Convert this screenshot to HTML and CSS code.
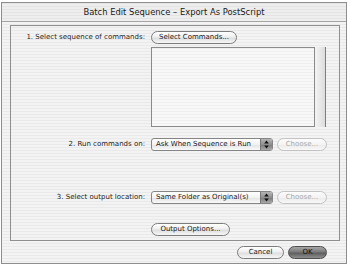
FILE: index.html
```html
<!DOCTYPE html>
<html>
<head>
<meta charset="utf-8">
<title>Batch Edit Sequence</title>
<link rel="stylesheet" href="styles.css">
</head>
<body>
<div class="window">
  <div class="titlebar">Batch Edit Sequence – Export As PostScript</div>
  <div class="content">
    <div class="group">
      <div class="row">
        <div class="label">1. Select sequence of commands:</div>
        <button class="btn btn-select">Select Commands...</button>
      </div>
      <div class="row row-list">
        <div class="label"></div>
        <div class="listwrap">
          <div class="list"></div>
          <div class="scroll"></div>
        </div>
      </div>
      <div class="row row-run">
        <div class="label">2. Run commands on:</div>
        <div class="popup">
          <span class="popup-text">Ask When Sequence is Run</span>
          <span class="popup-arrows"><svg width="5" height="9" viewBox="0 0 5 9"><path d="M2.5 0.5 L4.8 3.5 L0.2 3.5 Z M2.5 8.5 L4.8 5.5 L0.2 5.5 Z" fill="#111"/></svg></span>
        </div>
        <button class="btn btn-choose" disabled>Choose...</button>
      </div>
      <div class="row row-out">
        <div class="label">3. Select output location:</div>
        <div class="popup">
          <span class="popup-text">Same Folder as Original(s)</span>
          <span class="popup-arrows"><svg width="5" height="9" viewBox="0 0 5 9"><path d="M2.5 0.5 L4.8 3.5 L0.2 3.5 Z M2.5 8.5 L4.8 5.5 L0.2 5.5 Z" fill="#111"/></svg></span>
        </div>
        <button class="btn btn-choose" disabled>Choose...</button>
      </div>
      <div class="row row-opts">
        <div class="label"></div>
        <button class="btn btn-opts">Output Options...</button>
      </div>
    </div>
    <div class="actions">
      <button class="btn btn-cancel">Cancel</button>
      <button class="btn btn-ok">OK</button>
    </div>
  </div>
</div>
</body>
</html>
```

FILE: styles.css
```css
html, body {
  margin: 0;
  padding: 0;
  background: #ffffff;
}

body {
  font-family: "DejaVu Sans", "Liberation Sans", sans-serif;
  color: #1a1a1a;
}

.window {
  margin: 2px 0 0 1px;
  width: 346px;
  height: 262px;
  box-sizing: border-box;
  border: 1px solid #8e8e8e;
  background: repeating-linear-gradient(#e9e9e9 0 1px, #f3f3f3 1px 3px);
  display: flex;
  flex-direction: column;
}

.titlebar {
  height: 19px;
  box-sizing: border-box;
  border-bottom: 1px solid #a4a4a4;
  background: repeating-linear-gradient(#e4e4e4 0 1px, #eeeeee 1px 3px);
  text-align: center;
  font-size: 8.4px;
  line-height: 18px;
  color: #202020;
}

.content {
  padding: 3px 6px 0 8px;
}

.group {
  height: 216px;
  box-sizing: border-box;
  border: 1px solid #8f8f8f;
  padding-top: 5px;
}

.row {
  display: flex;
  align-items: center;
  gap: 6px;
  height: 13px;
}

.label {
  width: 134px;
  flex: none;
  text-align: right;
  font-size: 7px;
  line-height: 13px;
  white-space: nowrap;
  color: #1e1e1e;
}

.btn {
  height: 13px;
  box-sizing: border-box;
  margin: 0;
  padding: 0 4px;
  border: 1px solid #7c7c7c;
  border-radius: 7px;
  background: linear-gradient(#ffffff, #efefef 45%, #dedede 55%, #f7f7f7);
  font-family: "DejaVu Sans", "Liberation Sans", sans-serif;
  font-size: 7px;
  line-height: 11px;
  color: #1a1a1a;
  white-space: nowrap;
}

.btn-select { width: 86px; }

.row-list {
  height: 80px;
  margin-top: 3px;
  align-items: stretch;
}

.listwrap {
  display: flex;
  height: 80px;
}

.list {
  width: 164px;
  box-sizing: border-box;
  border: 1px solid #8a8a8a;
  background: repeating-linear-gradient(#efefef 0 1px, #f8f8f8 1px 3px);
}

.scroll {
  width: 11px;
  box-sizing: border-box;
  border-right: 1px solid #7e7e7e;
  background: linear-gradient(90deg, #f4f4f4, #dcdcdc);
}

.row-run { margin-top: 11px; }
.row-out { margin-top: 40px; }
.row-opts { margin-top: 19px; }

.popup {
  width: 122px;
  height: 13px;
  box-sizing: border-box;
  border: 1px solid #858585;
  border-radius: 3px;
  background: linear-gradient(#ffffff, #f2f2f2 50%, #e4e4e4 55%, #fafafa);
  display: flex;
  align-items: stretch;
  overflow: hidden;
}

.popup-text {
  flex: 1;
  font-size: 7px;
  line-height: 11px;
  padding-left: 4px;
  white-space: nowrap;
  color: #1a1a1a;
}

.popup-arrows {
  width: 11px;
  display: flex;
  align-items: center;
  justify-content: center;
  background: linear-gradient(#b4b4b4, #8f8f8f 50%, #7d7d7d 55%, #a8a8a8);
  border-left: 1px solid #777;
}

.btn-choose {
  width: 50px;
  margin-left: -2px;
  border-color: #c2c2c2;
  background: linear-gradient(#fcfcfc, #f3f3f3 50%, #ebebeb 55%, #f8f8f8);
  color: #a8a8a8;
}

.btn-opts { width: 79px; }

.actions {
  display: flex;
  justify-content: flex-end;
  gap: 4px;
  margin-top: 5px;
  padding-right: 13px;
}

.btn-cancel { width: 47px; }

.btn-ok {
  width: 39px;
  border-color: #4e4e4e;
  background: linear-gradient(#a6a6a6, #7a7a7a 45%, #5e5e5e 55%, #8e8e8e);
  color: #111;
}
```
